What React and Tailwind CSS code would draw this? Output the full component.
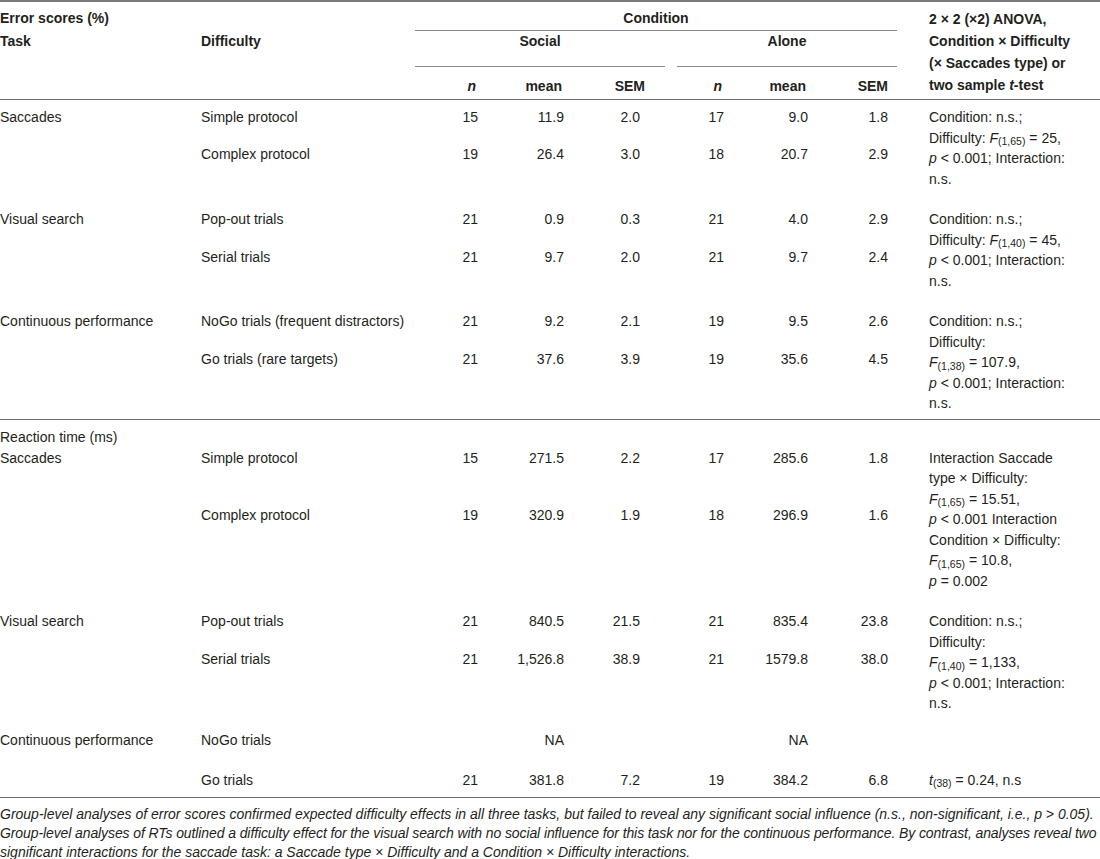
import React from 'react';

const grid = 'grid grid-cols-[201px_237px_40px_86px_76px_84px_84px_80px]';

const F = ({ sub }) => (
  <>
    <span className="italic">F</span>
    <sub>{sub}</sub>
  </>
);
const P = () => <span className="italic">p</span>;

const DataRow = ({ cells, className = '' }) => (
  <div className={`${grid} ${className}`}>
    {cells.map((c, i) => (
      <div key={i} className={i < 2 ? 'whitespace-nowrap' : 'text-right whitespace-nowrap'}>
        {c}
      </div>
    ))}
  </div>
);

const Group = ({ task, rows, firstH, pad, anova, anovaPad = '' }) => (
  <div className={`flex ${pad}`}>
    <div className="w-[888px]">
      <DataRow cells={[task, ...rows[0]]} className={firstH} />
      <DataRow cells={['', ...rows[1]]} />
    </div>
    <div className={`ml-[41px] w-[171px] whitespace-nowrap ${anovaPad}`}>
      {anova.map((line, i) => (
        <div key={i}>{line}</div>
      ))}
    </div>
  </div>
);

const errorAnova1 = [
  'Condition: n.s.;',
  <>Difficulty: <F sub="(1,65)" /> = 25,</>,
  <><P /> &lt; 0.001; Interaction:</>,
  'n.s.',
];
const errorAnova2 = [
  'Condition: n.s.;',
  <>Difficulty: <F sub="(1,40)" /> = 45,</>,
  <><P /> &lt; 0.001; Interaction:</>,
  'n.s.',
];
const errorAnova3 = [
  'Condition: n.s.;',
  'Difficulty:',
  <><F sub="(1,38)" /> = 107.9,</>,
  <><P /> &lt; 0.001; Interaction:</>,
  'n.s.',
];
const rtAnova1 = [
  'Interaction Saccade',
  'type × Difficulty:',
  <><F sub="(1,65)" /> = 15.51,</>,
  <><P /> &lt; 0.001 Interaction</>,
  'Condition × Difficulty:',
  <><F sub="(1,65)" /> = 10.8,</>,
  <><P /> = 0.002</>,
];
const rtAnova2 = [
  'Condition: n.s.;',
  'Difficulty:',
  <><F sub="(1,40)" /> = 1,133,</>,
  <><P /> &lt; 0.001; Interaction:</>,
  'n.s.',
];

export default function App() {
  return (
    <div className="w-[1100px] bg-white text-[14px] leading-[20.5px] text-[#231f20] font-['Liberation_Sans',Arial,sans-serif]">
      {/* header */}
      <div className="flex border-t-2 border-[#7a7a7a] border-b border-b-[#6b6b6b]">
        <div className="w-[929px] font-bold">
          <div className="flex h-[29px]">
            <div className="w-[415px] pt-[6px]">Error scores (%)</div>
            <div className="w-[482px] pt-[6px] text-center border-b border-[#8a8a8a]">Condition</div>
          </div>
          <div className="flex h-[36px]">
            <div className="w-[201px]">Task</div>
            <div className="w-[214px]">Difficulty</div>
            <div className="w-[250px] text-center border-b border-[#8a8a8a]">Social</div>
            <div className="w-[12px]" />
            <div className="w-[220px] text-center border-b border-[#8a8a8a]">Alone</div>
          </div>
          <div className={`${grid} h-[32px] pt-[9px]`}>
            <div />
            <div />
            <div className="text-right pr-[2px] italic">n</div>
            <div className="text-right pr-[2px]">mean</div>
            <div className="text-right -mr-[5px]">SEM</div>
            <div className="text-right pr-[2px] italic">n</div>
            <div className="text-right pr-[2px]">mean</div>
            <div className="text-right">SEM</div>
          </div>
        </div>
        <div className="w-[171px] pt-[6px] font-bold leading-[22px] whitespace-nowrap">
          <div>2 × 2 (×2) ANOVA,</div>
          <div>Condition × Difficulty</div>
          <div>(× Saccades type) or</div>
          <div>
            two sample <span className="italic">t</span>-test
          </div>
        </div>
      </div>

      {/* error scores */}
      <div className="border-b border-[#6b6b6b] pb-[5.5px]">
        <Group
          task="Saccades"
          pad="pt-[7px] pb-[10px]"
          firstH="h-[37px]"
          rows={[
            ['Simple protocol', '15', '11.9', '2.0', '17', '9.0', '1.8'],
            ['Complex protocol', '19', '26.4', '3.0', '18', '20.7', '2.9'],
          ]}
          anova={errorAnova1}
        />
        <Group
          task="Visual search"
          pad="pt-[10px] pb-[10px]"
          firstH="h-[38px]"
          rows={[
            ['Pop-out trials', '21', '0.9', '0.3', '21', '4.0', '2.9'],
            ['Serial trials', '21', '9.7', '2.0', '21', '9.7', '2.4'],
          ]}
          anova={errorAnova2}
        />
        <Group
          task="Continuous performance"
          pad="pt-[10px]"
          firstH="h-[38px]"
          rows={[
            ['NoGo trials (frequent distractors)', '21', '9.2', '2.1', '19', '9.5', '2.6'],
            ['Go trials (rare targets)', '21', '37.6', '3.9', '19', '35.6', '4.5'],
          ]}
          anova={errorAnova3}
        />
      </div>

      {/* reaction times */}
      <div className="border-b border-[#6b6b6b] pt-[7px] pb-[7px]">
        <div>Reaction time (ms)</div>
        <Group
          task="Saccades"
          pad="pb-[10px]"
          firstH="h-[57px]"
          rows={[
            ['Simple protocol', '15', '271.5', '2.2', '17', '285.6', '1.8'],
            ['Complex protocol', '19', '320.9', '1.9', '18', '296.9', '1.6'],
          ]}
          anova={rtAnova1}
        />
        <Group
          task="Visual search"
          pad="pt-[10px] pb-[10px]"
          firstH="h-[38px]"
          rows={[
            ['Pop-out trials', '21', '840.5', '21.5', '21', '835.4', '23.8'],
            ['Serial trials', '21', '1,526.8', '38.9', '21', '1579.8', '38.0'],
          ]}
          anova={rtAnova2}
        />
        <Group
          task="Continuous performance"
          pad="pt-[6px]"
          firstH="h-[40px]"
          rows={[
            ['NoGo trials', '', 'NA', '', '', 'NA', ''],
            ['Go trials', '21', '381.8', '7.2', '19', '384.2', '6.8'],
          ]}
          anovaPad="pt-[40px]"
          anova={[
            <>
              <span className="italic">t</span>
              <sub>(38)</sub> = 0.24, n.s
            </>,
          ]}
        />
      </div>

      {/* footnote */}
      <div className="pt-[7px] italic leading-[19px] whitespace-nowrap">
        <div>
          Group-level analyses of error scores confirmed expected difficulty effects in all three tasks, but failed to reveal any significant social influence (n.s., non-significant, i.e., p &gt; 0.05).
        </div>
        <div className="tracking-[-0.1px]">
          Group-level analyses of RTs outlined a difficulty effect for the visual search with no social influence for this task nor for the continuous performance. By contrast, analyses reveal two
        </div>
        <div>significant interactions for the saccade task: a Saccade type × Difficulty and a Condition × Difficulty interactions.</div>
      </div>
    </div>
  );
}
